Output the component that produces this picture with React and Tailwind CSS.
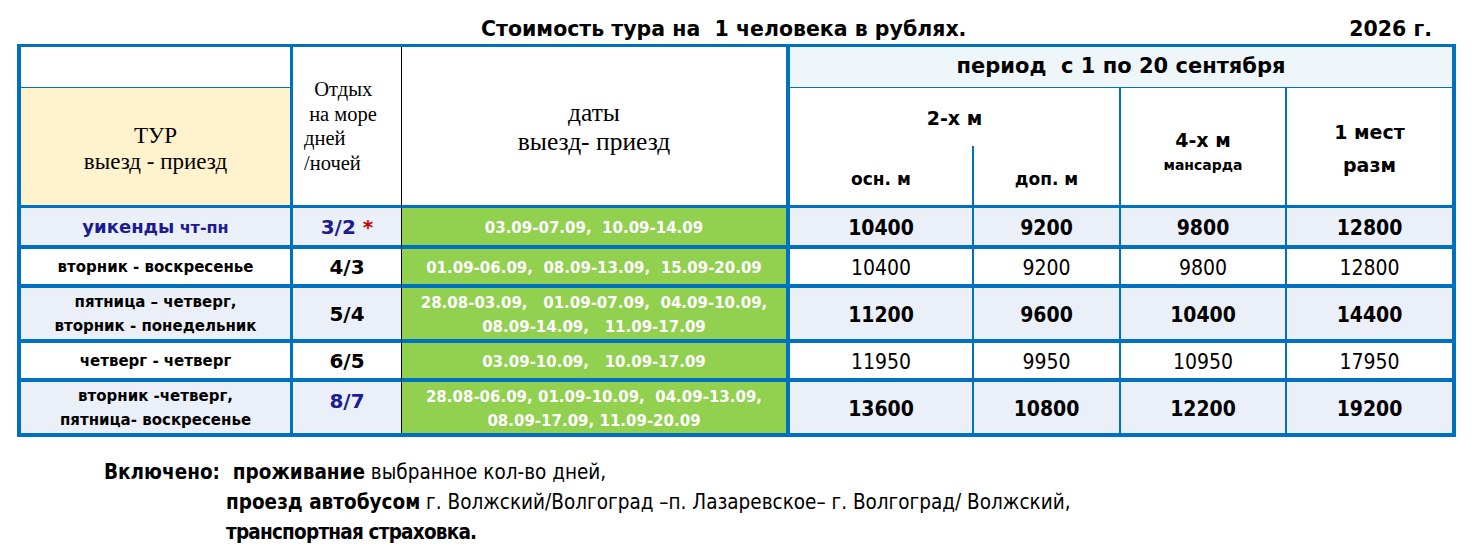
import React from "react";

const SANS = "font-['DejaVu_Sans',sans-serif]";
const COND = "font-['DejaVu_Sans_Condensed','DejaVu_Sans',sans-serif] font-stretch-condensed";
const SERIF = "font-['Liberation_Serif',serif]";

const rows = [
  {
    label: (
      <span className="text-[#1c1c94]">
        <span className="text-[18px]">уикенды</span> <span className="text-[16px]">чт-пн</span>
      </span>
    ),
    nights: (
      <span className="text-[#1c1c94]">
        3/2 <span className="text-[#c00000]">*</span>
      </span>
    ),
    nightsTop: false,
    dates: ["03.09-07.09,  10.09-14.09"],
    prices: ["10400", "9200", "9800", "12800"],
    bold: true,
    bg: "bg-[#eaeff8]",
  },
  {
    label: "вторник - воскресенье",
    nights: "4/3",
    dates: ["01.09-06.09,  08.09-13.09,  15.09-20.09"],
    prices: ["10400", "9200", "9800", "12800"],
    bold: false,
    bg: "bg-white",
  },
  {
    label: (
      <>
        пятница – четверг,
        <br />
        вторник - понедельник
      </>
    ),
    nights: "5/4",
    dates: ["28.08-03.09,   01.09-07.09,  04.09-10.09,", "08.09-14.09,   11.09-17.09"],
    prices: ["11200", "9600", "10400", "14400"],
    bold: true,
    bg: "bg-[#eaeff8]",
  },
  {
    label: "четверг - четверг",
    nights: "6/5",
    dates: ["03.09-10.09,   10.09-17.09"],
    prices: ["11950", "9950", "10950", "17950"],
    bold: false,
    bg: "bg-white",
  },
  {
    label: (
      <>
        вторник -четверг,
        <br />
        пятница- воскресенье
      </>
    ),
    nights: <span className="text-[#1c1c94]">8/7</span>,
    nightsTop: true,
    dates: ["28.08-06.09, 01.09-10.09,  04.09-13.09,", "08.09-17.09, 11.09-20.09"],
    prices: ["13600", "10800", "12200", "19200"],
    bold: true,
    bg: "bg-[#eaeff8]",
    last: true,
  },
];

function DataRow({ r }) {
  const bb = r.last ? "" : "border-b-4 border-b-[#0070c0]";
  const priceBorders = [
    "border-r-2 border-r-[#0070c0]",
    "border-r-2 border-r-[#0070c0]",
    "border-r-2 border-r-[#0070c0]",
    "",
  ];
  return (
    <>
      <div
        className={`${r.bg} ${bb} border-r-[3px] border-r-[#0070c0] flex items-center justify-center text-center text-[15px] font-bold leading-[24px] text-black pt-[1px]`}
      >
        <div>{r.label}</div>
      </div>
      <div
        className={`${r.bg} ${bb} border-r border-r-black flex justify-center text-[20px] font-bold text-black ${
          r.nightsTop ? "items-start pt-[4px]" : "items-center pt-[1px]"
        }`}
      >
        {r.nights}
      </div>
      <div
        className={`bg-[#92d050] ${bb} border-r-4 border-r-[#0070c0] flex flex-col items-center justify-center text-white text-[15px] font-bold leading-[24px] pt-[2px]`}
      >
        {r.dates.map((d, i) => (
          <div key={i} className="whitespace-pre">
            {d}
          </div>
        ))}
      </div>
      {r.prices.map((p, i) => (
        <div
          key={i}
          className={`${r.bg} ${bb} ${priceBorders[i]} ${COND} flex items-center justify-center text-[21px] text-black pt-[4px] ${
            r.bold ? "font-bold" : "font-normal"
          }`}
        >
          {p}
        </div>
      ))}
    </>
  );
}

export default function App() {
  return (
    <div className={`w-[1481px] h-[550px] bg-white ${SANS} text-black`}>
      <div className="flex items-center h-[44px] pt-[14px] font-bold text-[20.5px]">
        <div className="ml-[481px] whitespace-pre">Стоимость тура на  1 человека в рублях.</div>
        <div className="ml-auto mr-[49px]">2026 г.</div>
      </div>

      <div
        className="ml-[17px] w-[1439px] grid border-t-[3px] border-b-4 border-x-4 border-[#0070c0]"
        style={{
          gridTemplateColumns: "272px 109px 388px 184px 147px 166px 165px",
          gridTemplateRows: "41px 120px 41px 39px 55px 39px 51px",
        }}
      >
        {/* header col 1 top */}
        <div className="bg-white border-b border-b-[#0070c0] border-r-[3px] border-r-[#0070c0]" />
        {/* col 2 */}
        <div
          className={`row-span-2 bg-white border-b-[3px] border-b-[#0070c0] border-r border-r-black flex flex-col justify-center pl-[11px] ${SERIF} text-[20.5px] leading-[24.5px]`}
        >
          <div className="whitespace-pre">{"  Отдых"}</div>
          <div className="whitespace-pre">{" на море"}</div>
          <div>дней</div>
          <div>/ночей</div>
        </div>
        {/* col 3 */}
        <div
          className={`row-span-2 bg-white border-b-[3px] border-b-[#0070c0] border-r-4 border-r-[#0070c0] flex flex-col items-center justify-center ${SERIF} text-[25.5px] leading-[29px] pt-[2px]`}
        >
          <div>даты</div>
          <div>выезд- приезд</div>
        </div>
        {/* period */}
        <div className="col-span-4 bg-[#eef6fa] border-b border-b-[#0070c0] flex items-center justify-center font-bold text-[21px] whitespace-pre">
          период  с 1 по 20 сентября
        </div>
        {/* header col 1 bottom */}
        <div
          className={`bg-[#fff2cc] border-b-[3px] border-b-[#0070c0] border-r-[3px] border-r-[#0070c0] flex flex-col items-center justify-center ${SERIF} text-[23px] leading-[26px] pt-[4px]`}
        >
          <div>ТУР</div>
          <div>выезд - приезд</div>
        </div>
        {/* 2-x m */}
        <div className="col-span-2 bg-white border-b-[3px] border-b-[#0070c0] border-r-2 border-r-[#0070c0] flex flex-col font-bold">
          <div className="h-[58px] flex items-center justify-center text-[19px] pt-[2px]">2-х м</div>
          <div className="flex-1 flex">
            <div className="w-[184px] border-r-2 border-r-[#0070c0] flex items-center justify-center pt-[8px] text-[17px]">
              осн. м
            </div>
            <div className="flex-1 flex items-center justify-center pt-[8px] text-[17px]">доп. м</div>
          </div>
        </div>
        {/* 4-x m */}
        <div className="bg-white border-b-[3px] border-b-[#0070c0] border-r-2 border-r-[#0070c0] flex flex-col items-center justify-center font-bold pt-[10px]">
          <div className="text-[19px] leading-[26px]">4-х м</div>
          <div className="text-[14px] leading-[24px]">мансарда</div>
        </div>
        {/* 1 mest */}
        <div className="bg-white border-b-[3px] border-b-[#0070c0] flex flex-col items-center justify-center font-bold text-[19px] leading-[33px] pt-[5px]">
          <div>1 мест</div>
          <div>разм</div>
        </div>

        {rows.map((r, i) => (
          <DataRow key={i} r={r} />
        ))}
      </div>

      <div className={`mt-[20px] text-[20.5px] leading-[30px] ${COND}`}>
        <div className="ml-[104px] whitespace-pre">
          <span className="font-bold">Включено:  проживание</span> выбранное кол-во дней,
        </div>
        <div className="ml-[226px]">
          <span className="font-bold">проезд автобусом</span> г. Волжский/Волгоград –п. Лазаревское– г. Волгоград/ Волжский,
        </div>
        <div className="ml-[226px] font-bold tracking-[-0.78px]">транспортная страховка.</div>
      </div>
    </div>
  );
}
